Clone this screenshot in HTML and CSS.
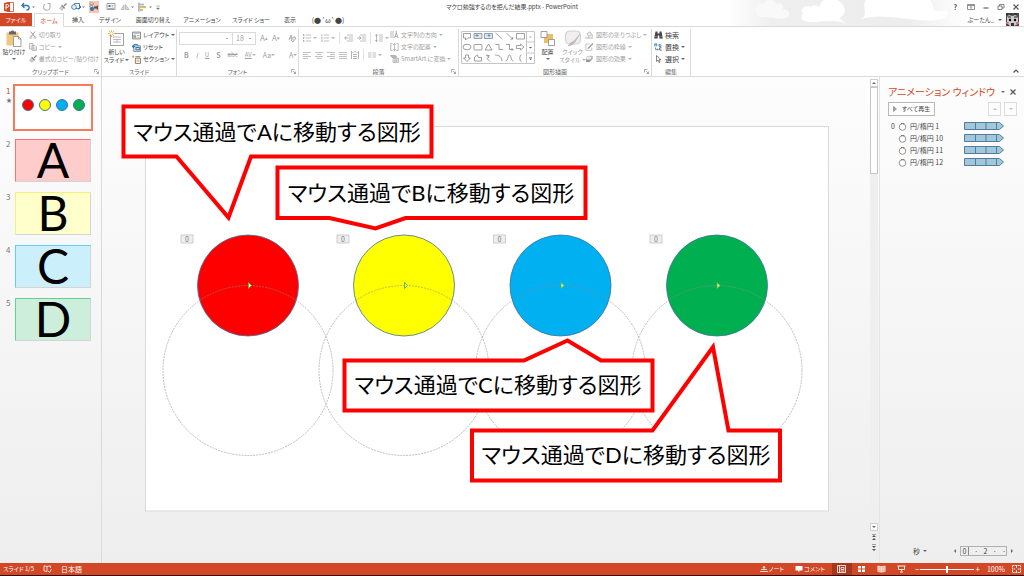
FILE: index.html
```
<!DOCTYPE html>
<html lang="ja">
<head>
    <meta charset="UTF-8">
    <meta name="viewport" content="width=device-width, initial-scale=1.0">
    <title>マクロ勉強するのを拒んだ結果.pptx - PowerPoint</title>
    <link rel="stylesheet" href="styles.css">
</head>
<body>
    <!-- Icon sprite -->
    <svg class="sprite" aria-hidden="true">
        <symbol id="i-cut" viewBox="0 0 8 8"><path d="M1.5 0.5L5.6 5.4M6 0.5L2.4 5.4" fill="none" stroke="#999"/><circle cx="1.8" cy="6.3" r="1.1" fill="none" stroke="#aaa" stroke-width=".8"/><circle cx="6" cy="6.3" r="1.1" fill="none" stroke="#aaa" stroke-width=".8"/></symbol>
        <symbol id="i-copy" viewBox="0 0 8 8"><path d="M.5.5h3.5v5.500h-3.500zM3 2.500h3l1.500 1.500v3.500h-4.500z" fill="#f4eef2" stroke="#b5a9b0" stroke-width=".8"/><path d="M4 5h2.500M4 6.200h2.500" stroke="#b5a9b0" stroke-width=".5"/></symbol>
        <symbol id="i-brush" viewBox="0 0 8 8"><path d="M7.500.5L5 3" stroke="#888" stroke-width="1.200"/><path d="M3 1.800l3.200 3.200-1 .8-3-3z" fill="#777"/><path d="M2 3.200l2.700 2.700L3 7.500.5 5.500z" fill="#ccc" stroke="#aaa" stroke-width=".4"/></symbol>
        <symbol id="i-layout" viewBox="0 0 8 8"><path d="M.5 1h7v6h-7z" fill="#fff" stroke="#777" stroke-width=".8"/><path d="M1.500 2.300h5M1.500 3.800h2v2h-2zM4.500 4h2M4.500 5.500h2" fill="#aaa" stroke="#999" stroke-width=".6"/></symbol>
        <symbol id="i-reset" viewBox="0 0 8 8"><path d="M1.500 2.500h6v5h-6z" fill="#dce9f5" stroke="#777" stroke-width=".7"/><path d="M1 3.500C1 .8 4.500.2 5.500 2.500M.2 2.200L1 4l1.600-1.300M3.500 4h3v2h-3z" fill="none" stroke="#2b7cb8" stroke-width=".9"/></symbol>
        <symbol id="i-section" viewBox="0 0 8 8"><path d="M0 1.500h2M1 .5v2" stroke="#e9a23b"/><path d="M3 1.500h4.500M3 2.800h4.500v4.700h-4.500z" fill="#fff" stroke="#777" stroke-width=".8"/><path d="M4 4h2.500v2.300H4z" fill="#f2c27c"/></symbol>
        <symbol id="i-textdir" viewBox="0 0 9 8"><path d="M1 0v7M3 0v7" stroke="#aaa" stroke-width=".8"/><path d="M4.500 7L6.300 2l1.800 5M5 5.500h2.500M6.300 0v2" fill="none" stroke="#999" stroke-width=".8"/></symbol>
        <symbol id="i-textpos" viewBox="0 0 9 8"><path d="M2.500.5H.8v7h1.700M6.500.5h1.700v7H6.500M4.500.500v7M3.300 2l1.200-1.500L5.700 2M3.300 6l1.200 1.500L5.700 6" fill="none" stroke="#aaa" stroke-width=".8"/></symbol>
        <symbol id="i-smartart" viewBox="0 0 9 8"><path d="M.5.5h5L7 2.500H2z" fill="#b8b8b8" stroke="#999" stroke-width=".6"/><path d="M3 3.500h5.500v4H3z" fill="#ececec" stroke="#aaa" stroke-width=".7"/><path d="M4 5h3.500M4 6.200h3.500" stroke="#999" stroke-width=".6"/></symbol>
        <symbol id="i-fill" viewBox="0 0 9 8"><path d="M2 2.500L5 .8l2 3L3.500 5.500z" fill="#eee" stroke="#aaa" stroke-width=".7"/><path d="M7.300 3.500c1 1.500.8 2-.1 2z" fill="#999"/><path d="M.5 6h7v1.500h-7z" fill="#ddd" stroke="#bbb" stroke-width=".4"/></symbol>
        <symbol id="i-outline" viewBox="0 0 9 8"><path d="M4.500 1H.8v6.300h6V4.500" fill="none" stroke="#b5b5b5" stroke-width=".8"/><path d="M8 .5L3.500 5l-.8.500" stroke="#999" stroke-width="1.200"/></symbol>
        <symbol id="i-effect" viewBox="0 0 9 8"><path d="M1 4l3-3h3.500v3l-3 3H1z" fill="#9d8f98"/><path d="M1 4.200l1.500-3h4.500l-1 3.500H1.500z" fill="#f0ecef" stroke="#aaa" stroke-width=".5"/></symbol>
        <symbol id="i-find" viewBox="0 0 9 8"><path d="M1.500.5h2v2h2v-2h2L8.800 7.500H5.300V4.500H3.700V7.500H.2z" fill="#444"/><path d="M1 5.500h1.800M6.300 5.500H8" stroke="#aaa" stroke-width=".6"/></symbol>
        <symbol id="i-replace" viewBox="0 0 9 8"><path d="M.8 3.500V.8h2v2.700M.8 2h2M5 1v2.500h2V1.800H5M1.500 4.500v2h2.500M3.200 5.500l1 1-1 1" fill="none" stroke="#397fb5" stroke-width=".8"/><path d="M7.500 4.800H5.600v2.300h2" fill="none" stroke="#444" stroke-width=".8"/></symbol>
        <symbol id="i-select" viewBox="0 0 9 8"><path d="M2.500.5v6l1.500-1.300L5 7.500l1-.5L5 4.800h2z" fill="#fff" stroke="#555" stroke-width=".7"/></symbol>
        <symbol id="i-lines" viewBox="0 0 8 8"><path d="M0 1.500h8M0 3.500h8M0 5.500h8M0 7.500h8" stroke="#b0b0b0" stroke-width=".8"/></symbol>
        <symbol id="i-left" viewBox="0 0 8 8"><path d="M0 1.500h8M0 3.500h5M0 5.500h8M0 7.500h5" stroke="#b0b0b0" stroke-width=".8"/></symbol>
        <symbol id="i-center" viewBox="0 0 8 8"><path d="M0 1.500h8M1.500 3.500h5M0 5.500h8M1.500 7.500h5" stroke="#b0b0b0" stroke-width=".8"/></symbol>
        <symbol id="i-right" viewBox="0 0 8 8"><path d="M0 1.500h8M3 3.500h5M0 5.500h8M3 7.500h5" stroke="#b0b0b0" stroke-width=".8"/></symbol>
        <symbol id="i-spread" viewBox="0 0 8 8"><path d="M.5 0v8M7.500 0v8M1.500 1.500h1M5.500 1.500h1M2 3.500h4M2 5.500h4M2 7.500h4M3 .8h2" stroke="#aaa" stroke-width=".9"/></symbol>
        <symbol id="i-columns" viewBox="0 0 8 8"><path d="M0 2h3.500M4.500 2H8M0 4h3.500M4.500 4H8M0 6h3.500M4.500 6H8" stroke="#b0b0b0" stroke-width=".8"/></symbol>
        <symbol id="i-bullets" viewBox="0 0 8 8"><path d="M0 1h1.300M0 4h1.300M0 7h1.300" stroke="#999" stroke-width="1.300"/><path d="M2.800 1H8M2.800 4H8M2.800 7H8" stroke="#b0b0b0" stroke-width=".8"/></symbol>
        <symbol id="i-numbers" viewBox="0 0 8 8"><path d="M.8 0v2M.3 3.200h1v.8l-.8 1h1M.3 6.200h1v1.500h-1" fill="none" stroke="#999" stroke-width=".6"/><path d="M2.800 1H8M2.800 4H8M2.800 7H8" stroke="#b0b0b0" stroke-width=".8"/></symbol>
        <symbol id="i-outdent" viewBox="0 0 9 8"><path d="M3 1h6M5 3h4M5 5h4M3 7h6" stroke="#b0b0b0" stroke-width=".8"/><path d="M4.500 4H.8M2.300 2.300L.6 4l1.700 1.700" fill="none" stroke="#999" stroke-width=".8"/></symbol>
        <symbol id="i-indent" viewBox="0 0 9 8"><path d="M3 1h6M5 3h4M5 5h4M3 7h6" stroke="#b0b0b0" stroke-width=".8"/><path d="M.3 4H4M2.300 2.300L4 4 2.300 5.700" fill="none" stroke="#999" stroke-width=".8"/></symbol>
        <symbol id="i-spacing" viewBox="0 0 8 8"><path d="M1.500.5v7M.3 2l1.200-1.500L2.700 2M.3 6l1.200 1.500L2.700 6" fill="none" stroke="#999" stroke-width=".7"/><path d="M4 1h4M4 3h4M4 5h4M4 7h4" stroke="#b0b0b0" stroke-width=".8"/></symbol>
        <symbol id="i-launch" viewBox="0 0 5 5"><path d="M.5 3.500v-3h3M2 2l2.500 2.500M4.500 2.500v2h-2" fill="none" stroke="#888" stroke-width=".7"/></symbol>
        <symbol id="i-timer" viewBox="0 0 9 9"><circle cx="4.500" cy="5" r="3.300" fill="#fff" stroke="#888" stroke-width=".9"/><path d="M3 1.500h1.500" stroke="#c9503b" stroke-width="1.100"/><path d="M4.800 1.500h1.500" stroke="#57934a" stroke-width="1.100"/></symbol>
        <symbol id="i-bar" viewBox="0 0 40 8"><path d="M.5.5h35l4 3.500-4 3.500h-35z" fill="#a3c6db" stroke="#4f7f9c"/><path d="M11.500 1v6M22 1v6M32.500 1v6" stroke="#4f7f9c"/></symbol>
    </svg>

    <header class="top">
        <svg class="clouds" viewBox="0 0 270 26" aria-hidden="true">
            <defs>
                <linearGradient id="sky"><stop offset="0" stop-color="#fff"/><stop offset=".18" stop-color="#efefef"/><stop offset=".75" stop-color="#ededed"/><stop offset="1" stop-color="#fff"/></linearGradient>
            </defs>
            <path d="M0 0h240v26H0z" fill="url(#sky)"/>
            <path d="M29 12c-4-4 0-10 6-8 2-6 12-5 13 0 5-2 9 1 7 6 6-2 9 6 3 8-8 2-14-1-22-1-5 1-9-2-7-5z" fill="#f9f9f9"/>
            <path d="M75 14c-4-6 3-10 8-7 3-3 6-1 9 0C91-1 104-5 112 2c8 5 5 14-1 16l8 6c-14-6-26-1-38-2-8-1-9-5-6-8z" fill="#fff"/>
            <path d="M132 19c10-3 1-12 6-19h64c6 6-2 12 13 11 6-1 8 4-1 8-22 6-50-7-82 0z" fill="#fff"/>
        </svg>

        <div class="titlebar">
            <div class="quick-access">
                <svg class="app" viewBox="0 0 10 10" width="10" height="10"><path d="M3 .5h6.500v9H3z" fill="#fff" stroke="#d24726" stroke-width=".8"/><path d="M0 1l6-1v10L0 9z" fill="#d24726"/><path d="M2 7.500v-5h1.500c1.700 0 1.700 2.700 0 2.700H2" fill="none" stroke="#fff"/></svg>
                <button aria-label="元に戻す"><svg viewBox="0 0 14 10" width="14" height="10"><path d="M3 1L1 3.500 3.500 6M1.500 3.500H6c3 0 3 4.500-.5 4.500" fill="none" stroke="#2e75b6" stroke-width="1.300"/><path d="M11 4.500h3L12.500 6z" fill="#777"/></svg></button>
                <button class="redo" aria-label="繰り返し"><svg viewBox="0 0 10 10" width="10" height="10"><path d="M3 2.200A3.300 3.300 0 1 0 7.500 3M5.500 1.500H8v2.300" fill="none" stroke="#b0b0b0" stroke-width="1.100"/></svg></button>
                <button aria-label="書式"><svg width="8" height="8"><use href="#i-brush"/></svg></button>
                <button aria-label="図形"><svg viewBox="0 0 14 10" width="14" height="10"><path d="M3.500 1.500h5v5h-5z" fill="#fff" stroke="#2e75b6" stroke-width=".9"/><circle cx="3" cy="5" r="2.400" fill="#e7f0f8" stroke="#2e75b6" stroke-width=".8"/><path d="M8 3l2 2-2.500 2.500" fill="none" stroke="#2e75b6"/><path d="M11 4.500h3L12.500 6z" fill="#777"/></svg></button>
                <button class="on" aria-label="アニメーション ウィンドウ"><svg viewBox="0 0 10 12" width="10" height="12"><path d="M1 2h3.500v1.500H1zM1 4.500h2.500v1.500H1z" fill="#fff" stroke="#777" stroke-width=".6"/><circle cx="3" cy="8" r="2" fill="#2e75b6"/><circle cx="6" cy="6.500" r="1.300" fill="#555"/><path d="M6 6.500l3-2.500v5z" fill="#555"/></svg></button>
                <button aria-label="配置"><svg viewBox="0 0 10 10" width="10" height="10"><path d="M1 1.500h8v6H1z" fill="#fff" stroke="#777" stroke-width=".7"/><path d="M2.500 3h2v2h-2z" fill="#2e75b6"/><path d="M5.500 3.500h2M5.500 5h2M2 6.500h6" stroke="#777" stroke-width=".6"/></svg></button>
                <button aria-label="回転"><svg viewBox="0 0 14 10" width="14" height="10"><path d="M1 7.500L4 3v4.500zM5.500 7.500V2.500L9 7.500z" fill="#ddd" stroke="#aaa" stroke-width=".7"/><path d="M11 4.500h3L12.500 6z" fill="#777"/></svg></button>
                <button aria-label="揃え"><svg viewBox="0 0 14 10" width="14" height="10"><path d="M1 .5v9" stroke="#777"/><path d="M2 1.500h4v2H2z" fill="#9dc3e6"/><path d="M2 4h6v2.200H2z" fill="#edb556"/><path d="M2 7h3v2H2z" fill="#bbb"/><path d="M11 4.500h3L12.500 6z" fill="#777"/></svg></button>
                <button aria-label="カスタマイズ"><svg viewBox="0 0 4 10" width="4" height="10"><path d="M0 4h4M.5 6h3L2 7.500z" fill="#777" stroke="#777" stroke-width=".5"/></svg></button>
            </div>
            <h1 class="title">マクロ勉強するのを拒んだ結果.pptx - PowerPoint</h1>
            <div class="window-buttons">
                <button class="help">?</button>
                <button aria-label="リボン表示"><svg viewBox="0 0 8 8" width="8" height="8"><path d="M.5 1.500h7v5h-7zM.5 2.500h7M4 6V3.500M3 4.500l1-1 1 1" fill="none" stroke="#777" stroke-width=".8"/></svg></button>
                <button aria-label="最小化"><svg viewBox="0 0 8 8" width="8" height="8"><path d="M1.500 5h5" stroke="#666" stroke-width="1.200"/></svg></button>
                <button aria-label="元のサイズ"><svg viewBox="0 0 8 8" width="8" height="8"><path d="M1 3h4v3.500H1zM2.500 3V1.500h4.500v3.500H5" fill="none" stroke="#666" stroke-width=".8"/></svg></button>
                <button aria-label="閉じる"><svg viewBox="0 0 8 8" width="8" height="8"><path d="M1.500 1.500l5 5M6.500 1.500l-5 5" stroke="#555" stroke-width="1.200"/></svg></button>
            </div>
        </div>

        <nav class="tabs">
            <button class="file">ファイル</button>
            <button class="active">ホーム</button>
            <button>挿入</button>
            <button>デザイン</button>
            <button>画面切り替え</button>
            <button>アニメーション</button>
            <button>スライド ショー</button>
            <button>表示</button>
            <button class="face">(●´ω`●)</button>
            <div class="account">
                <span>ぶーたん_</span>
                <i class="caret"></i>
                <svg viewBox="0 0 13 13" width="13" height="13"><path d="M0 0h13v13H0z" fill="#4a4a4a"/><path d="M1 4l2-2 3 1 4-1 2 3v6l-4 2H4l-3-3z" fill="#ccc"/><path d="M0 1h2M4 1h2M8 1h3M2 4h3M8 4h3" stroke="#222"/><circle cx="4" cy="7" r="1.200"/><circle cx="9" cy="7" r="1.200"/><path d="M5 10h3v3H5z" fill="#333"/><path d="M0 9h2.500v2H0zM10 9h3v2h-3z" fill="#f0608a"/></svg>
            </div>
        </nav>
    </header>

    <section class="ribbon">
        <div class="group clipboard">
            <div class="tools">
                <button class="big">
                    <svg viewBox="0 0 16 17" width="16" height="17"><path d="M.5 2.500h12v13H.5z" fill="#edc87e"/><path d="M3 1.500h2c0-1.500 3-1.500 3 0h2v3H3z" fill="#666"/><path d="M7.500 6.500h5l2.500 2.500v7.500H7.500z" fill="#fff" stroke="#888" stroke-width=".8"/><path d="M12.500 6.500V9H15" fill="none" stroke="#888" stroke-width=".8"/></svg>
                    <span>貼り付け</span>
                    <i class="caret"></i>
                </button>
                <div class="column off">
                    <button><svg width="8" height="8"><use href="#i-cut"/></svg>切り取り</button>
                    <button><svg width="8" height="8"><use href="#i-copy"/></svg>コピー <i class="caret"></i></button>
                    <button><svg width="8" height="8"><use href="#i-brush"/></svg>書式のコピー/貼り付け</button>
                </div>
            </div>
            <h2>クリップボード<svg width="5" height="5"><use href="#i-launch"/></svg></h2>
        </div>

        <div class="group slides">
            <div class="tools">
                <button class="big">
                    <svg viewBox="0 0 17 17" width="17" height="17"><path d="M2.500 3.500h13v12h-13z" fill="#fff" stroke="#888" stroke-width=".8"/><path d="M5 7h8M5 9.500h8M5 12h8M9 10v3" stroke="#bbb"/><path d="M3.500 0v7M0 3.500h7M1 1l5 5M6 1L1 6" stroke="#eebb4d"/><circle cx="3.500" cy="3.500" r="1.300" fill="#fff"/></svg>
                    <span>新しい<br>スライド <i class="caret"></i></span>
                </button>
                <div class="column">
                    <button><svg width="9" height="9"><use href="#i-layout"/></svg>レイアウト <i class="caret"></i></button>
                    <button><svg width="9" height="9"><use href="#i-reset"/></svg>リセット</button>
                    <button><svg width="9" height="9"><use href="#i-section"/></svg>セクション <i class="caret"></i></button>
                </div>
            </div>
            <h2>スライド</h2>
        </div>

        <div class="group font">
            <div class="tools rows off">
                <div class="row">
                    <div class="combo">
                        <select aria-label="フォント"><option></option></select>
                        <select aria-label="フォント サイズ" class="size"><option>18</option></select>
                    </div>
                    <button class="letter">A<sup>▴</sup></button>
                    <button class="letter">A<sup>▾</sup></button>
                    <i class="line"></i>
                    <button aria-label="書式のクリア"><svg viewBox="0 0 9 9" width="9" height="9"><path d="M1 6l2-5 1.500 4M1.500 4h2.500" fill="none" stroke="#999" stroke-width=".8"/><path d="M3 6l3-3.500 2 1.500-3 4z" fill="#e5e0e4" stroke="#999" stroke-width=".7"/></svg></button>
                </div>
                <div class="row styles">
                    <button><b>B</b></button>
                    <button><em>I</em></button>
                    <button><u>U</u></button>
                    <button><b>S</b></button>
                    <button><s>abc</s></button>
                    <button><u>AV</u><i class="caret"></i></button>
                    <button>Aa<i class="caret"></i></button>
                    <i class="line"></i>
                    <button>A <i class="caret"></i></button>
                </div>
            </div>
            <h2>フォント<svg width="5" height="5"><use href="#i-launch"/></svg></h2>
        </div>

        <div class="group paragraph">
            <div class="tools off">
                <div class="rows">
                    <div class="row">
                        <button aria-label="箇条書き"><svg width="8" height="8"><use href="#i-bullets"/></svg><i class="caret"></i></button>
                        <button aria-label="段落番号"><svg width="8" height="8"><use href="#i-numbers"/></svg><i class="caret"></i></button>
                        <i class="line"></i>
                        <button aria-label="インデントを減らす"><svg width="9" height="8"><use href="#i-outdent"/></svg></button>
                        <button aria-label="インデントを増やす"><svg width="9" height="8"><use href="#i-indent"/></svg></button>
                        <i class="line"></i>
                        <button aria-label="行間"><svg width="8" height="8"><use href="#i-spacing"/></svg><i class="caret"></i></button>
                    </div>
                    <div class="row">
                        <button aria-label="左揃え"><svg width="8" height="8"><use href="#i-left"/></svg></button>
                        <button aria-label="中央揃え"><svg width="8" height="8"><use href="#i-center"/></svg></button>
                        <button aria-label="右揃え"><svg width="8" height="8"><use href="#i-right"/></svg></button>
                        <button aria-label="両端揃え"><svg width="8" height="8"><use href="#i-lines"/></svg></button>
                        <button aria-label="均等割り付け"><svg width="8" height="8"><use href="#i-spread"/></svg></button>
                        <i class="line"></i>
                        <button aria-label="段組み"><svg width="8" height="8"><use href="#i-columns"/></svg><i class="caret"></i></button>
                    </div>
                </div>
                <div class="column">
                    <button><svg width="9" height="8"><use href="#i-textdir"/></svg>文字列の方向 <i class="caret"></i></button>
                    <button><svg width="9" height="8"><use href="#i-textpos"/></svg>文字の配置 <i class="caret"></i></button>
                    <button><svg width="9" height="8"><use href="#i-smartart"/></svg>SmartArt に変換 <i class="caret"></i></button>
                </div>
            </div>
            <h2>段落<svg width="5" height="5"><use href="#i-launch"/></svg></h2>
        </div>

        <div class="group drawing">
            <div class="tools">
                <svg class="gallery" viewBox="0 0 74 33" width="74" height="33" role="img" aria-label="図形">
                    <path d="M.5.500h73v32H.5z" fill="#fff" stroke="#c6c6c6"/>
                    <path d="M65.500.5v32M65.500 11h8M65.500 22h8" stroke="#c6c6c6"/>
                    <path d="M68 6.500l1.500-1.500L71 6.500z" fill="#aaa"/><path d="M68 16l1.500 1.500L71 16zM68 27.500l1.500 1.500 1.500-1.500zM68 26h3v.6h-3z" fill="#555"/>
                    <g fill="none" stroke="#777" stroke-width=".7">
                        <path d="M2.500 2.500h7v4.500H6.500L4.500 9V7h-2z"/>
                        <path d="M13 2.500h8v5h-8zM23.500 2.500h8v5h-8z" fill="#dbe8f4"/>
                        <path d="M15 4h2v1h-2zM27 4h2v1h-2z" stroke="#2e75b6"/>
                        <path d="M34.500 2l7 6M45.500 2l6 6M51.700 6v2.200h-2.200M55.500 2.500h8v5.500h-8z"/>
                        <ellipse cx="6" cy="16" rx="4" ry="2.800"/><rect x="13" y="13.500" width="8" height="5.500" rx="1"/>
                        <path d="M24 19l3.500-6 3.500 6zM34.500 13.500h3.500v5h4M45 13.500h3.500v5h3.500M50.500 17l1.500 1.500-1.500 1.500M55.500 14.500h4v-1.500l3.500 3-3.500 3v-1.500h-4z"/>
                        <path d="M4.500 24v3H2.500L6 30.500 9.500 27H7.500v-3zM13.500 30V26l3-2 1 2.500h3V30zM25 24l3 2-2 1.500 3 3M26 24l3 1M34 24c4 0 7 2 7 6M44.500 30c3 0 2-6 4-6s1 6 4 6M60.500 24c-2 0-1 2.500-2 3.200 1 .5 0 3.300 2 3.300"/>
                    </g>
                </svg>
                <button class="big">
                    <svg viewBox="0 0 16 17" width="16" height="17"><path d="M4 4h9v9H4z" fill="#edbe63"/><path d="M1 1.500h6v6H1zM8.500 9.500h6v6h-6z" fill="#fff" stroke="#888" stroke-width=".8"/></svg>
                    <span>配置</span>
                    <i class="caret"></i>
                </button>
                <button class="big off">
                    <svg viewBox="0 0 16 17" width="16" height="17"><rect x=".5" y="1" width="15" height="13" rx="4" fill="#f1edf1" stroke="#c8c2c8" stroke-width=".8"/><path d="M15 4l-6 7-3 1.500-3 3.500 4-1 3-3z" fill="#bbb" stroke="#aaa" stroke-width=".4"/></svg>
                    <span>クイック<br>スタイル <i class="caret"></i></span>
                </button>
                <div class="column off">
                    <button><svg width="9" height="8"><use href="#i-fill"/></svg>図形の塗りつぶし <i class="caret"></i></button>
                    <button><svg width="9" height="8"><use href="#i-outline"/></svg>図形の枠線 <i class="caret"></i></button>
                    <button><svg width="9" height="8"><use href="#i-effect"/></svg>図形の効果 <i class="caret"></i></button>
                </div>
            </div>
            <h2>図形描画<svg width="5" height="5"><use href="#i-launch"/></svg></h2>
        </div>

        <div class="group editing">
            <div class="tools">
                <div class="column">
                    <button><svg width="9" height="8"><use href="#i-find"/></svg>検索</button>
                    <button><svg width="9" height="8"><use href="#i-replace"/></svg>置換 <i class="caret"></i></button>
                    <button><svg width="9" height="8"><use href="#i-select"/></svg>選択 <i class="caret"></i></button>
                </div>
            </div>
            <h2>編集</h2>
        </div>

        <button class="collapse" aria-label="リボンを折りたたむ"><svg viewBox="0 0 6 4" width="6" height="4"><path d="M.5 3.500L3 1l2.500 2.500" fill="none" stroke="#555" stroke-width="1.200"/></svg></button>
    </section>

    <main class="workspace">
        <ol class="thumbs">
            <li class="selected">
                <span>1<small>★</small></span>
                <div class="thumb"><i class="red"></i><i class="yellow"></i><i class="blue"></i><i class="green"></i></div>
            </li>
            <li><span>2</span><div class="thumb a">A</div></li>
            <li><span>3</span><div class="thumb b">B</div></li>
            <li><span>4</span><div class="thumb c">C</div></li>
            <li><span>5</span><div class="thumb d">D</div></li>
        </ol>

        <div class="stage">
            <svg class="slide" viewBox="102 77 768 486">
                <rect x="145.500" y="126.500" width="683" height="384.500" fill="#fff" stroke="#d9d9d9"/>

                <!-- Shapes that follow a circular motion path -->
                <g stroke="#41719c" stroke-width=".8">
                    <circle cx="248" cy="285.500" r="50.500" fill="#ff0000"/>
                    <circle cx="404" cy="285.500" r="50.500" fill="#ffff00"/>
                    <circle cx="560.500" cy="285.500" r="50.500" fill="#00b0f0"/>
                    <circle cx="717" cy="285.500" r="50.500" fill="#00b050"/>
                </g>
                <g class="path">
                    <circle cx="248" cy="370.500" r="85"/>
                    <circle cx="404" cy="370.500" r="85"/>
                    <circle cx="560.500" cy="370.500" r="85"/>
                    <circle cx="717" cy="370.500" r="85"/>
                </g>
                <g fill="#e8f5c8" stroke="#5ab52c" stroke-width=".9">
                    <path d="M248.500 282.500l3 3-3 3z"/>
                    <path d="M404.500 282.500l3 3-3 3z"/>
                    <path d="M561 282.500l3 3-3 3z"/>
                    <path d="M717 282.500l3 3-3 3z"/>
                </g>
                <g class="tag">
                    <rect x="181" y="235" width="12" height="8"/><text x="187" y="242">0</text>
                    <rect x="337" y="235" width="12" height="8"/><text x="343" y="242">0</text>
                    <rect x="493.500" y="235" width="12" height="8"/><text x="499.500" y="242">0</text>
                    <rect x="650" y="235" width="12" height="8"/><text x="656" y="242">0</text>
                </g>

                <!-- Callouts -->
                <g class="callout">
                    <path d="M123.500 106.500H431.500V156.500H251L228.500 217.500L176.500 156.500H123.500z"/>
                    <path d="M277.500 167.500H585.500V218H405.500L375.500 228.500L329.500 218H277.500z"/>
                    <path d="M344.500 360.500H524L567.500 340.500L601 360.500H652.500V410.500H344.500z"/>
                    <path d="M472 430.500H652.500L713 347L728.500 430.500H780V480.500H472z"/>
                    <text x="277" y="140">マウス通過でAに移動する図形</text>
                    <text x="431" y="201">マウス通過でBに移動する図形</text>
                    <text x="498" y="393">マウス通過でCに移動する図形</text>
                    <text x="626" y="463">マウス通過でDに移動する図形</text>
                </g>
            </svg>
        </div>

        <div class="scrollbar">
            <button aria-label="上へ"><i class="caret up"></i></button>
            <div class="handle"></div>
            <div class="track"></div>
            <button aria-label="下へ"><i class="caret"></i></button>
            <svg viewBox="0 0 8 24" width="8" height="24"><path d="M2 6l2-2 2 2zM2 9l2-2 2 2zM2 3h4v.6H2zM2 15l2 2 2-2zM2 18l2 2 2-2zM2 13.500h4v.6H2z" fill="#555"/></svg>
        </div>

        <aside class="pane">
            <div class="pane-head">
                <h2>アニメーション ウィンドウ</h2>
                <i class="caret"></i>
                <button aria-label="閉じる"><svg viewBox="0 0 8 8" width="8" height="8"><path d="M1.500 1.500l5 5M6.500 1.500l-5 5" stroke="#555" stroke-width="1.200"/></svg></button>
            </div>
            <div class="pane-tools">
                <button class="play"><svg viewBox="0 0 4 6" width="4" height="6"><path d="M.5.500L3.500 3 .5 5.500z" fill="#aaa" stroke="#777" stroke-width=".6"/></svg>すべて再生</button>
                <button class="move" aria-label="前へ移動"><i class="caret up"></i></button>
                <button class="move" aria-label="後へ移動"><i class="caret"></i></button>
            </div>
            <ul class="effects">
                <li><span class="order">0</span><svg width="9" height="9"><use href="#i-timer"/></svg><span>円/楕円 1</span><svg width="40" height="8"><use href="#i-bar"/></svg></li>
                <li><span class="order"></span><svg width="9" height="9"><use href="#i-timer"/></svg><span>円/楕円 10</span><svg width="40" height="8"><use href="#i-bar"/></svg></li>
                <li><span class="order"></span><svg width="9" height="9"><use href="#i-timer"/></svg><span>円/楕円 11</span><svg width="40" height="8"><use href="#i-bar"/></svg></li>
                <li><span class="order"></span><svg width="9" height="9"><use href="#i-timer"/></svg><span>円/楕円 12</span><svg width="40" height="8"><use href="#i-bar"/></svg></li>
            </ul>
            <div class="timeline">
                <button>秒 <i class="caret"></i></button>
                <i class="caret prev"></i>
                <div class="scale"><span class="now">0</span><span>·</span><span>2</span><span>·</span><span>·</span></div>
                <i class="caret next"></i>
            </div>
        </aside>
    </main>

    <footer class="status">
        <span>スライド 1/5</span>
        <svg viewBox="0 0 9 8" width="9" height="8"><path d="M4 6.500V1.500L1 .8v5l3 .7M4 1.500L7.500.8V3M5 6l1.500 1.500L8.500 4" fill="none" stroke="#fff" stroke-width=".8"/></svg>
        <span class="language">日本語</span>
        <div class="status-right">
            <button class="notes"><svg viewBox="0 0 8 8" width="8" height="8"><path d="M1 4.500h6M0 6.500h8M4 1v3M2.800 3L4 1.500 5.200 3" fill="none" stroke="#fff" stroke-width=".8"/></svg>ノート</button>
            <button><svg viewBox="0 0 8 8" width="8" height="8"><path d="M.5 1h7v4.500H4.500L4 7.500 3 5.500H.5z" fill="#fff"/></svg>コメント</button>
            <div class="views">
                <button class="on" aria-label="標準"><svg viewBox="0 0 9 8" width="9" height="8"><path d="M.5.5h8v7h-8zM2.500.500v7M4 2.500h3v2H4zM3.500 6h4" fill="none" stroke="#fff" stroke-width=".8"/></svg></button>
                <button aria-label="一覧"><svg viewBox="0 0 9 8" width="9" height="8"><path d="M1 1h3v2.500H1zM5 1h3v2.500H5zM1 4.500h3V7H1zM5 4.500h3V7H5z" fill="#fff"/></svg></button>
                <button aria-label="閲覧表示"><svg viewBox="0 0 9 8" width="9" height="8"><path d="M.8 1l3.500.6v5.600L.8 6.500zM8.200 1l-3.500.6v5.600l3.500-.7zM1.500 3l2 .3M1.500 4.500l2 .3M5.500 3.300l2-.3M5.500 4.800l2-.3" fill="#eba796" stroke="#fff" stroke-width=".6"/></svg></button>
                <button aria-label="スライド ショー"><svg viewBox="0 0 9 8" width="9" height="8"><path d="M.5 1h8M1.500 1v3.500h6V1M4.500 4.500v2M3 7h3" fill="none" stroke="#fff" stroke-width=".9"/></svg></button>
            </div>
            <label class="zoom">−<input type="range" min="10" max="190" value="100" aria-label="ズーム">+</label>
            <span class="percent">100%</span>
            <button aria-label="ウィンドウに合わせる"><svg viewBox="0 0 9 8" width="9" height="8"><path d="M.5.500h8v7h-8zM4.500 1v1.800M4.500 7V5.200M1.500 4h1.700M7.500 4H5.800" fill="none" stroke="#fff" stroke-width=".9" stroke-dasharray="2 .6"/></svg></button>
        </div>
    </footer>
</body>
</html>
```
FILE: styles.css
```
:root {
    --accent: #d24726;
    --text: #444444;
    --disabled: #a0a0a0;
    --line: #dadada;
}

* {
    margin: 0;
    padding: 0;
    box-sizing: border-box;
}

body {
    display: flex;
    flex-direction: column;
    height: 100vh;
    overflow: hidden;
    font-family: "Noto Sans CJK JP", sans-serif;
    font-size: 6px;
    font-feature-settings: "palt";
    line-height: 10px;
    color: var(--text);
    background: #fff;
    white-space: nowrap;
}

button {
    display: flex;
    align-items: center;
    border: 0;
    background: none;
    font: inherit;
    font-feature-settings: inherit;
    color: inherit;
    white-space: nowrap;
}

svg {
    display: block;
    flex: none;
}

.sprite {
    position: absolute;
    width: 0;
    height: 0;
}

.caret {
    display: inline-block;
    flex: none;
    vertical-align: middle;
    border: 2px solid transparent;
    border-top-color: currentColor;
    border-bottom: 0;
    opacity: .8;
}

.caret.up {
    border-bottom: 2px solid currentColor;
    border-top: 0;
}

/* Title bar and tabs */
.top {
    position: relative;
    border-bottom: 1px solid var(--line);
}

.clouds {
    position: absolute;
    top: 0;
    right: 26px;
    height: 26px;
}

.titlebar {
    position: relative;
    display: grid;
    grid-template-columns: 1fr auto 1fr;
    align-items: center;
    height: 13px;
    padding: 0 4px;
}

.quick-access {
    display: flex;
    align-items: center;
    gap: 4px;
}

.quick-access .app {
    margin-right: 3px;
}

.quick-access .redo {
    padding: 0 3px;
}

.quick-access .on {
    margin-right: 3px;
    background: #f9c6b4;
}

.title {
    font-size: 6px;
    font-weight: normal;
}

.window-buttons {
    display: flex;
    justify-content: flex-end;
    gap: 7px;
}

.window-buttons .help {
    padding-right: 3px;
    font-size: 7px;
    font-weight: bold;
}

.tabs {
    position: relative;
    display: grid;
    grid-template-columns: 32px 32px 28px 36px 50px 48px 50px 28px 48px 1fr;
    height: 13px;
}

.tabs button {
    justify-content: center;
}

.tabs .file {
    background: var(--accent);
    color: #fff;
}

.tabs .active {
    margin-left: 2px;
    margin-bottom: -1px;
    border: 1px solid var(--line);
    border-bottom: 0;
    background: #fff;
    color: var(--accent);
}

.tabs .face {
    font-size: 7px;
}

.account {
    display: flex;
    align-items: center;
    justify-content: flex-end;
    gap: 4px;
    padding-right: 5px;
}

/* Ribbon */
.ribbon {
    display: flex;
    height: 50px;
    padding-top: 2px;
    border-bottom: 1px solid var(--line);
}

.group {
    position: relative;
    display: flex;
    flex-direction: column;
    justify-content: space-between;
    padding: 0 2px;
    border-right: 1px solid var(--line);
}

.group h2 {
    display: flex;
    align-items: center;
    justify-content: center;
    height: 9px;
    font-size: 6px;
    font-weight: normal;
    color: #666;
}

.group h2 svg {
    position: absolute;
    right: 2px;
}

.clipboard { width: 102px; }
.slides { width: 75px; }
.font { width: 122px; }
.paragraph { width: 160px; }
.drawing { width: 193px; }
.editing { width: 39px; }

.tools {
    display: flex;
    gap: 3px;
    height: 37px;
}

.big {
    flex-direction: column;
    width: 25px;
    padding-top: 1px;
    line-height: 8px;
    text-align: center;
}

.big > svg {
    margin-bottom: 1px;
}

.big > .caret {
    margin-top: 2px;
}

.off {
    color: var(--disabled);
}

.column {
    display: flex;
    flex-direction: column;
}

.column button {
    height: 12px;
    gap: 2px;
}

.editing .column {
    font-size: 7px;
}

.rows {
    display: flex;
    flex-direction: column;
    gap: 3px;
    padding-top: 2px;
}

.row {
    display: flex;
    align-items: center;
    gap: 4px;
    height: 14px;
}

.row button {
    gap: 2px;
}

.line {
    width: 1px;
    height: 12px;
    background: #e2e2e2;
}

.combo {
    display: flex;
}

.combo select {
    width: 54px;
    height: 13px;
    padding-left: 3px;
    appearance: none;
    border: 1px solid var(--line);
    background: linear-gradient(#aaa, #aaa) right 4px center / 2px 1px no-repeat;
    font: inherit;
    font-size: 7px;
    color: inherit;
}

.combo .size {
    width: 24px;
    margin-left: -1px;
}

.row .letter {
    gap: 0;
    font-size: 8px;
}

.letter sup {
    font-size: 5px;
}

.row.styles {
    gap: 7px;
    padding-left: 5px;
    font-size: 7px;
}

.row.styles button {
    gap: 0;
}

.styles s,
.styles u {
    font-size: 6px;
}

.paragraph .tools {
    gap: 1px;
}

.paragraph .row {
    padding-left: 2px;
}

.gallery {
    margin-top: 2px;
}

.drawing .tools {
    gap: 0;
}

.collapse {
    align-self: flex-end;
    margin-left: auto;
    padding: 0 5px 3px;
}

/* Workspace */
.workspace {
    flex: 1;
    display: flex;
    min-height: 0;
    background: linear-gradient(#fdfdfd, #eeeeee);
}

.thumbs {
    display: flex;
    flex-direction: column;
    gap: 10px;
    width: 102px;
    padding: 9px 10px 0 6px;
    border-right: 1px solid var(--line);
    list-style: none;
}

.thumbs li {
    display: flex;
    justify-content: space-between;
    height: 43px;
    font-size: 8px;
    line-height: 9px;
    color: #777;
}

.thumbs small {
    display: block;
    font-size: 6px;
    color: #777;
}

.thumbs .selected {
    color: var(--accent);
}

.thumb {
    display: flex;
    align-items: center;
    justify-content: center;
    width: 76px;
    padding-bottom: 2px;
    border: 1px solid #d4d4d4;
    font-family: Lato, sans-serif;
    font-size: 48px;
    color: #000;
}

.selected .thumb {
    gap: 5px;
    padding-bottom: 6px;
    border: 0;
    outline: 2px solid #f47b5b;
    background: #fff;
}

.thumb i {
    width: 12px;
    height: 12px;
    border: 1px solid #41719c;
    border-radius: 50%;
}

.red { background: #ff0000; }
.yellow { background: #ffff00; }
.blue { background: #00b0f0; }
.green { background: #00b050; }

.thumb.a { background: #ffcccc; border-left-color: #ff7070; border-top-color: #ff7070; }
.thumb.b { background: #ffffcc; border-left-color: #f5f07a; border-top-color: #f5f07a; }
.thumb.c { background: #cceffc; border-left-color: #66cef5; border-top-color: #66cef5; }
.thumb.d { background: #cceedb; border-left-color: #66cf95; border-top-color: #66cf95; }

.stage {
    flex: 1;
    min-width: 0;
}

.slide {
    width: 100%;
    height: 100%;
}

.path circle {
    fill: none;
    stroke: #8c8c8c;
    stroke-opacity: .7;
    stroke-width: .8;
    stroke-dasharray: 2 1;
}

.tag rect {
    fill: #eeeeee;
    stroke: #c4c4c4;
    stroke-width: .8;
}

.tag text {
    font-size: 7px;
    text-anchor: middle;
    fill: #777;
}

.callout path {
    fill: #fff;
    stroke: #ff0000;
    stroke-width: 4;
}

.callout text {
    font-family: Lato, "Noto Sans CJK JP", sans-serif;
    font-size: 22px;
    text-anchor: middle;
    fill: #000;
}

.scrollbar {
    display: flex;
    flex-direction: column;
    width: 10px;
    padding: 2px 1px 8px 0;
    border-right: 1px solid #e4e4e4;
}

.scrollbar button {
    justify-content: center;
    height: 8px;
    border: 1px solid #cfcfcf;
    background: #fff;
}

.handle {
    height: 87px;
    border: 1px solid #c6c6c6;
    background: #fff;
}

.track {
    flex: 1;
    background: #efefef;
}

/* Animation pane */
.pane {
    display: flex;
    flex-direction: column;
    width: 144px;
    padding: 8px 7px 7px 8px;
}

.pane-head {
    display: flex;
    align-items: center;
    gap: 4px;
    height: 14px;
}

.pane-head h2 {
    margin-right: auto;
    font-size: 10px;
    font-weight: normal;
    color: var(--accent);
}

.pane-tools {
    display: flex;
    gap: 3px;
    margin-top: 3px;
}

.pane-tools button {
    justify-content: center;
    width: 13px;
    height: 14px;
    border: 1px solid #dcdcdc;
    color: #b0b0b0;
}

.pane-tools .play {
    width: 47px;
    gap: 5px;
    margin-right: auto;
    border-color: #b8b8b8;
    background: #fff;
    color: var(--text);
}

.effects {
    margin-top: 4px;
    list-style: none;
    font-size: 7px;
}

.effects li {
    display: grid;
    grid-template-columns: 5px 9px 51px 40px;
    align-items: center;
    gap: 3px;
    height: 12px;
    padding-left: 2px;
}

.effects .order {
    text-align: right;
}

.timeline {
    display: flex;
    align-items: center;
    gap: 3px;
    margin-top: auto;
    padding-right: 3px;
    font-size: 7px;
}

.timeline button {
    gap: 3px;
    margin-right: auto;
    padding-left: 25px;
}

.caret.prev {
    transform: rotate(90deg);
}

.caret.next {
    transform: rotate(-90deg);
}

.scale {
    display: flex;
    justify-content: space-between;
    width: 47px;
    border: 1px solid #b0b0b0;
    line-height: 8px;
}

.scale .now {
    width: 8px;
    border-right: 1px solid #888;
    text-align: center;
}

/* Status bar */
.status {
    display: flex;
    align-items: center;
    gap: 9px;
    height: 13px;
    padding: 0 3px;
    border-bottom: 1px solid #2a0d06;
    background: var(--accent);
    color: #fff;
}

.status .language,
.status .percent {
    font-size: 7px;
}

.status-right {
    display: flex;
    align-items: center;
    gap: 7px;
    height: 12px;
    margin-left: auto;
}

.status-right button {
    gap: 1px;
    height: 12px;
}

.status-right .notes {
    margin-right: 4px;
}

.views {
    display: flex;
}

.views button {
    justify-content: center;
    width: 20px;
}

.views .on {
    background: #a5371d;
}

.zoom {
    display: flex;
    align-items: center;
    gap: 1px;
    margin-left: -4px;
    font-size: 8px;
}

.zoom input {
    width: 54px;
    height: 8px;
    appearance: none;
    background: linear-gradient(#fff, #fff) center / 100% 1px no-repeat;
}

.zoom input::-webkit-slider-thumb {
    appearance: none;
    width: 2px;
    height: 7px;
    background: #fff;
}
```
